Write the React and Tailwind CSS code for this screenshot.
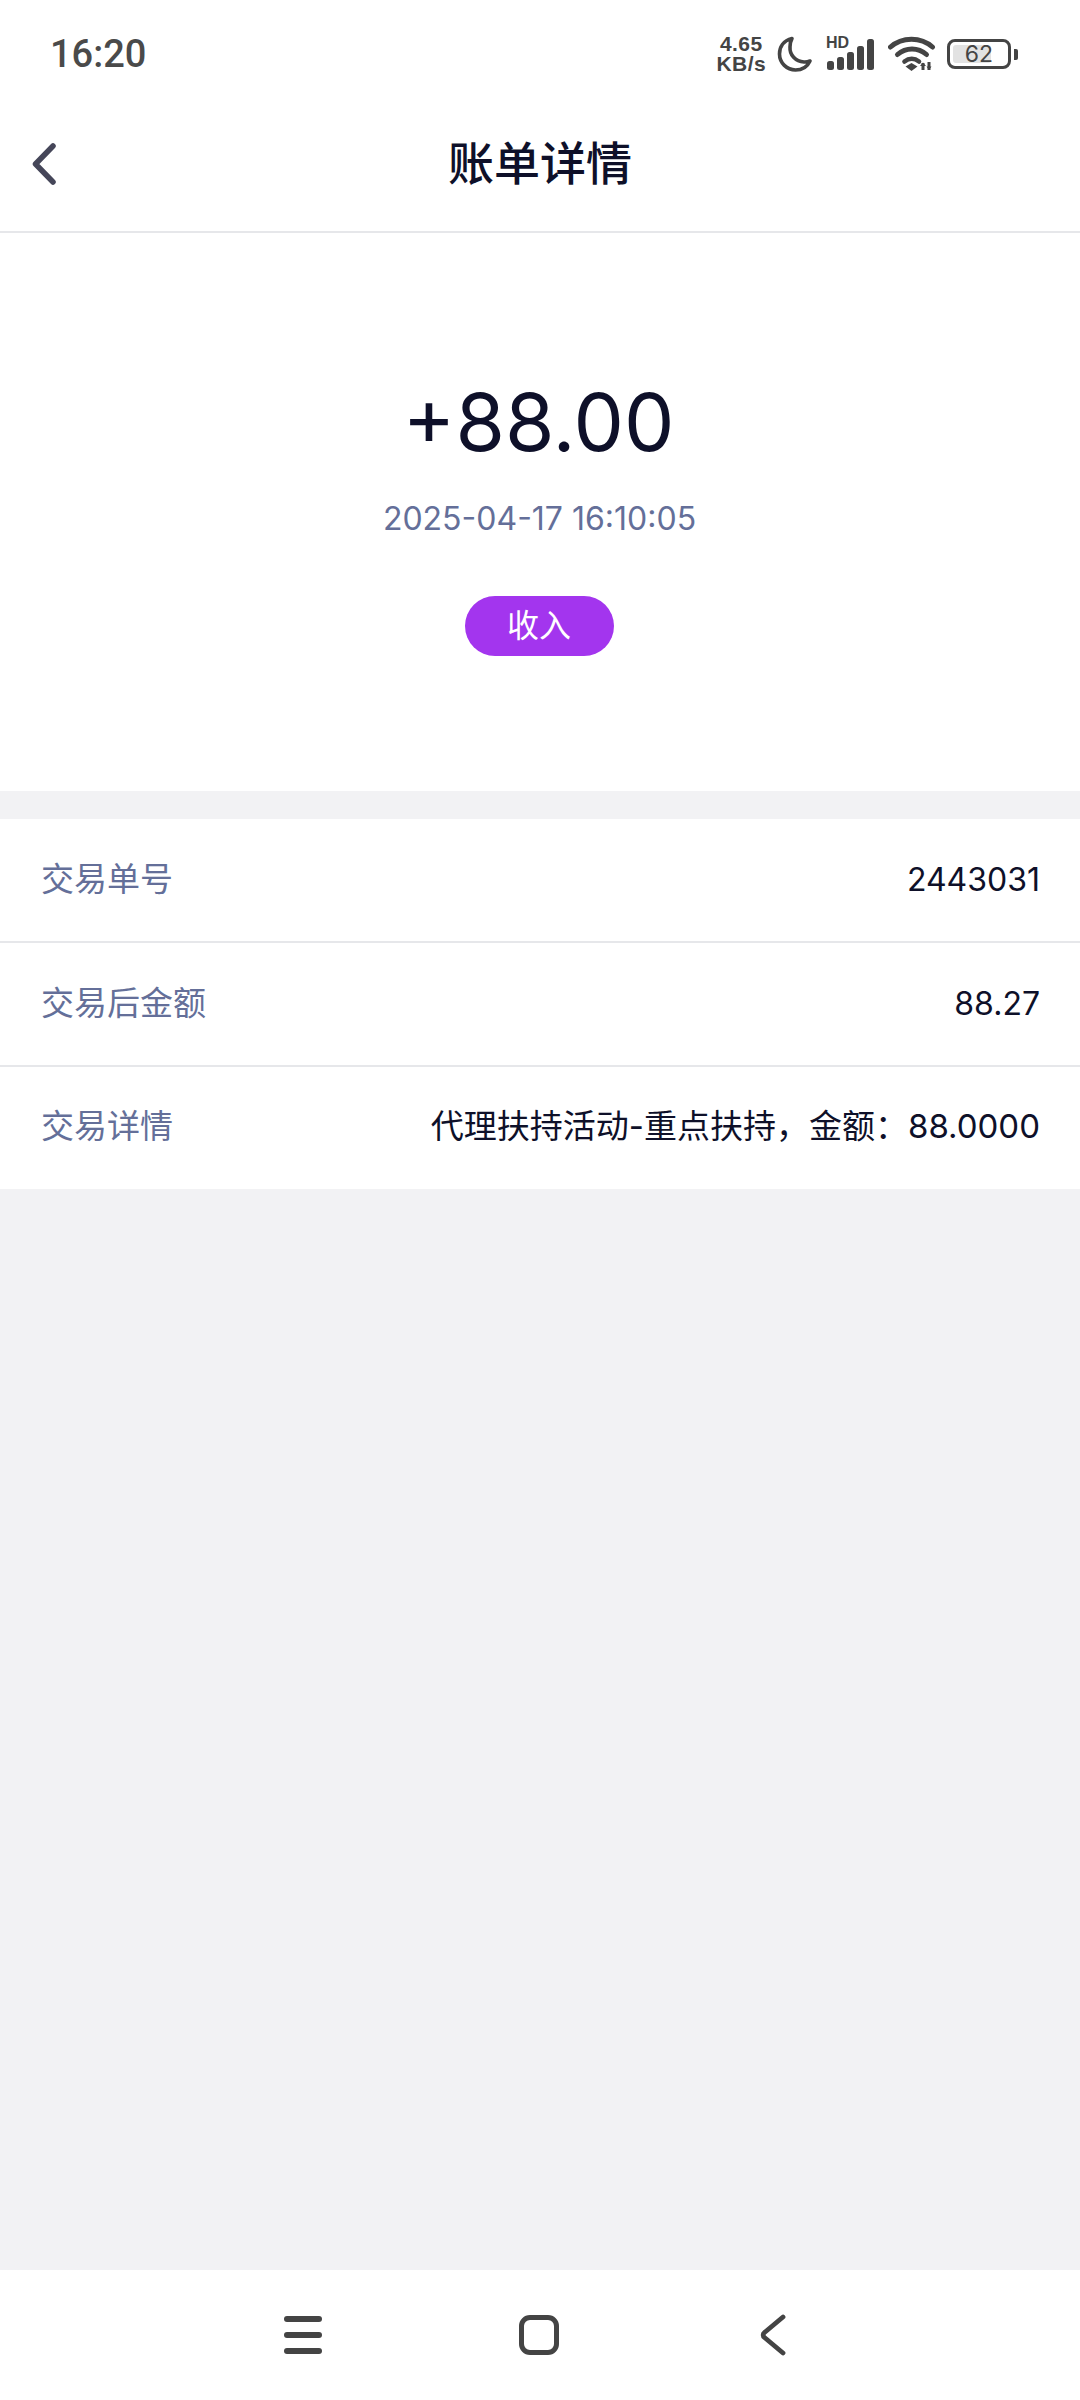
const cjk = "font-['Inter','Noto_Sans_CJK_SC',sans-serif]";

const rows = [
  { label: "交易单号", value: "2443031" },
  { label: "交易后金额", value: "88.27" },
  { label: "交易详情", value: "代理扶持活动-重点扶持，金额：88.0000" },
];

const MoonIcon = () => (
  <svg width="36" height="38" viewBox="0 0 36 38" fill="none">
    <path
      d="M15 3.500C6.500 5.500 2.500 12 2.500 19c0 9 7.500 16 16 16 6.500 0 12-3.500 14.500-9-2 .8-4 1.100-6 1-8.500-.5-14.500-7-14-15 .1-3.300.8-6.500 2-8.500z"
      stroke="#444"
      strokeWidth="3.600"
      strokeLinejoin="round"
    />
  </svg>
);

const SignalIcon = () => (
  <div className="relative w-[50px] h-[34px]">
    <span className="absolute left-0 top-[-2px] text-[16px] leading-[16px] font-bold text-[#444] font-['Liberation_Sans',sans-serif]">HD</span>
    <svg width="50" height="34" viewBox="0 0 50 34" fill="#444">
      <rect x="1" y="24" width="7" height="9" rx="2.500" />
      <rect x="11" y="20" width="7" height="13" rx="2.500" />
      <rect x="21" y="15" width="7" height="18" rx="2.500" />
      <rect x="31" y="9" width="7" height="24" rx="2.500" />
      <rect x="41" y="2" width="7" height="31" rx="2.500" />
    </svg>
  </div>
);

const WifiIcon = () => (
  <svg width="48" height="36" viewBox="0 0 48 36" fill="none">
    <path d="M2.500 11C14 .5 33 .5 44.500 11" stroke="#444" strokeWidth="5" strokeLinecap="round" />
    <path d="M9.500 18.500c8.500-7.500 20.500-7.500 29 0" stroke="#444" strokeWidth="5" strokeLinecap="round" />
    <path d="M16.500 25.500c4.500-3.500 10-3.500 14.500 0" stroke="#444" strokeWidth="4.600" strokeLinecap="round" />
    <path d="M17.500 30.500l6-3.500 6 3.500-6 4.500z" fill="#444" />
    <path d="M35 27v7M41 26v8" stroke="#444" strokeWidth="3" />
    <path d="M32 30l3-3.500 3 3.500M38.500 30.500l2.500 3.500 2.500-3.500" fill="#444" />
  </svg>
);

const BatteryIcon = () => (
  <div className="flex items-center gap-[3px]">
    <div className="relative w-[64px] h-[30px] rounded-[8px] border-[3px] border-[#444] p-[3px]">
      <div className="h-full w-[38px] rounded-[3px] bg-[#e2e2e2]" />
      <span className="absolute inset-0 flex items-center justify-center text-[23px] leading-none text-[#444] font-['Inter',sans-serif]">62</span>
    </div>
    <div className="w-[4px] h-[11px] rounded-r-[2px] bg-[#444]" />
  </div>
);

const App = () => {
  return (
    <div className={`w-[1080px] h-[2400px] flex flex-col bg-[#f2f2f4] ${cjk}`}>
      {/* Status bar */}
      <div className="h-[72px] bg-white flex items-center justify-between pl-[50px] pr-[62px] pt-[36px]">
        <span className="text-[38px] leading-none font-medium text-[#4a4a4a] font-['Roboto',sans-serif]">16:20</span>
        <div className="flex items-center gap-[10px]">
          <div className="mr-[1px] flex flex-col items-center font-['Liberation_Sans',sans-serif] font-bold text-[#444] text-[21px] leading-[20px] tracking-[0.4px]">
            <span>4.65</span>
            <span>KB/s</span>
          </div>
          <MoonIcon />
          <div className="ml-[3px] mr-[2px]">
            <SignalIcon />
          </div>
          <WifiIcon />
          <div className="ml-[1px]">
            <BatteryIcon />
          </div>
        </div>
      </div>

      {/* Header */}
      <div className="relative h-[161px] bg-white border-b-2 border-[#e6e7ea] flex items-center justify-center pt-[22px]">
        <button className="absolute left-[32px] top-[71px]">
          <svg width="24" height="42" viewBox="0 0 24 42" fill="none">
            <path d="M21 3L3.500 21 21 39" stroke="#454659" strokeWidth="5.500" strokeLinecap="round" strokeLinejoin="round" />
          </svg>
        </button>
        <h1 className="text-[46px] font-medium text-[#0e1029] leading-none">账单详情</h1>
      </div>

      {/* Amount */}
      <div className="h-[558px] bg-white flex flex-col items-center pt-[139px]">
        <div className="mr-[3px] text-[80px] leading-[100px] text-[#0e1029]">+88.00</div>
        <div className="mr-[1px] mt-[27px] text-[32px] leading-[40px] text-[#646f99]">2025-04-17 16:10:05</div>
        <div className="mr-[2px] mt-[57px] w-[149px] h-[60px] rounded-full bg-[#a335ee] text-white text-[32px] flex items-center justify-center">收入</div>
      </div>

      {/* Details */}
      <div className="mt-[28px] bg-white">
        {rows.map((row, i) => (
          <div
            key={row.label}
            className={`flex items-center justify-between pl-[41px] pr-[40px] text-[33px] ${i < rows.length - 1 ? "h-[124px] border-b-2 border-[#e6e7ea]" : "h-[122px] pb-[2px]"}`}
          >
            <span className="text-[#646f99]">{row.label}</span>
            <span className={`text-[#0e1029] ${i < rows.length - 1 ? "text-[32px]" : "text-[33px]"}`}>{row.value}</span>
          </div>
        ))}
      </div>

      <div className="flex-1" />

      {/* Nav bar */}
      <div className="h-[130px] bg-white flex items-center pl-[284px]">
        <div className="w-[38px] flex flex-col gap-[10px]">
          <div className="h-[6px] rounded-full bg-[#444]" />
          <div className="h-[6px] rounded-full bg-[#444]" />
          <div className="h-[6px] rounded-full bg-[#444]" />
        </div>
        <div className="ml-[197px] w-[40px] h-[40px] rounded-[11px] border-[5px] border-[#444]" />
        <svg className="ml-[201px]" width="26" height="42" viewBox="0 0 26 42" fill="none">
          <path d="M23 3L4.500 18.500a3 3 0 0 0 0 5L23 39" stroke="#444" strokeWidth="4.800" strokeLinecap="round" strokeLinejoin="round" />
        </svg>
      </div>
    </div>
  );
};

export default App;
